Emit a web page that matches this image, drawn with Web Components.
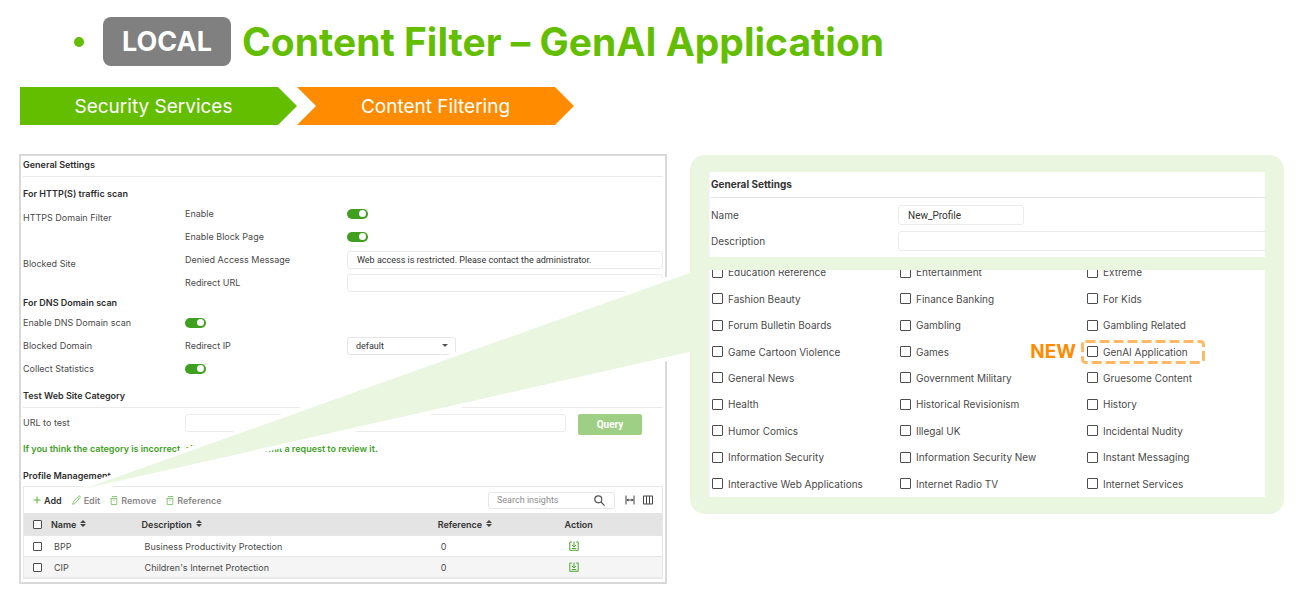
<!DOCTYPE html>
<html lang="en">
<head>
<meta charset="utf-8">
<meta name="viewport" content="width=device-width, initial-scale=1">
<title>Content Filter – GenAI Application</title>
<style>
  body { margin: 0; background: #fff; font-family: Inter, "Liberation Sans", sans-serif; color: #4a4a4a; }
</style>
</head>
<body>
<release-page></release-page>
<script>
const define = (name, markup, setup) => {
  const template = document.createElement('template');
  template.innerHTML = markup;
  customElements.define(name, class extends HTMLElement {
    constructor() {
      super();
      this.attachShadow({ mode: 'open' }).append(template.content.cloneNode(true));
    }
    connectedCallback() {
      if (setup && !this.ready) { this.ready = true; setup(this, this.shadowRoot); }
    }
  });
};

/* On/off switch */
define('ui-toggle', `
  <style>
    :host { display: block; line-height: 0; }
    input { appearance: none; box-sizing: border-box; width: 21px; height: 10px; margin: 0; padding: 2px; border-radius: 5px;
      background: #b5b5b5; display: flex; align-items: center; }
    input:checked { background: #3f9f1f; justify-content: flex-end; }
    input::before { content: ""; width: 7px; height: 7px; border-radius: 50%; background: #fff; }
  </style>
  <input type="checkbox" role="switch" checked>`,
  (host, root) => root.querySelector('input').setAttribute('aria-label', host.getAttribute('label')));

/* Tick box with an optional caption */
define('ui-check', `
  <style>
    :host { display: block; }
    label { display: flex; align-items: center; gap: 5px; }
    input { appearance: none; flex: none; box-sizing: border-box; width: var(--box, 11px); height: var(--box, 11px); margin: 0;
      border: 1px solid #4d4d4d; border-radius: 1px; background: #fff; }
    input:checked { background: #3f9f1f; }
  </style>
  <label><input type="checkbox"><slot></slot></label>`,
  (host, root) => {
    if (host.hasAttribute('label')) root.querySelector('input').setAttribute('aria-label', host.getAttribute('label'));
  });

/* Single-line text box */
define('ui-field', `
  <style>
    :host { display: block; }
    input { display: block; box-sizing: border-box; width: 100%; height: var(--h, 18px); margin: 0; padding: 0 9px;
      border: 1px solid #ebebeb; border-radius: 3px; background: #fff; font: inherit; font-family: Roboto, sans-serif; color: #333; outline: 0; }
  </style>
  <input type="text">`,
  (host, root) => {
    const input = root.querySelector('input');
    input.value = host.getAttribute('value') || '';
    input.setAttribute('aria-label', host.getAttribute('label'));
  });

/* Slide title with its badge */
define('page-title', `
  <style>
    :host { display: flex; align-items: center; padding-left: 74px; }
    .dot { width: 10px; height: 10px; border-radius: 50%; background: #64be00; margin-right: 19px; }
    .badge { box-sizing: border-box; min-width: 128px; height: 49px; border-radius: 8px; background: #808080; color: #fff;
      font-size: 27px; font-weight: 700; line-height: 49px; text-align: center; margin-right: 11px; }
    h1 { margin: 0; font-size: 39px; line-height: 49px; font-weight: 650; color: #64be00; white-space: nowrap; font-feature-settings: "calt" 0; }
  </style>
  <span class="dot"></span><span class="badge"><slot name="badge"></slot></span><h1><slot></slot></h1>`);

/* Arrow-shaped step of the menu path */
define('path-step', `
  <style>
    :host { display: block; box-sizing: border-box; width: 277px; height: 38px; line-height: 39px; font-size: 19px; text-align: center; color: #fff;
      background: #64be00; padding-right: 10px; clip-path: polygon(0 0, calc(100% - 19px) 0, 100% 50%, calc(100% - 19px) 100%, 0 100%); }
    :host([current]) { background: #ff8c00; padding-right: 0;
      clip-path: polygon(0 0, calc(100% - 19px) 0, 100% 50%, calc(100% - 19px) 100%, 0 100%, 19px 50%); }
  </style>
  <slot></slot>`);

/* Toolbar and table of filter profiles */
define('profile-table', `
  <style>
    :host { display: block; border: 1px solid #e8e8e8; border-bottom-width: 2px; font-size: 9px; }
    .bar { display: flex; align-items: center; height: 26px; padding: 0 9px; }
    button { display: flex; align-items: center; gap: 3px; border: 0; margin: 0; padding: 0; background: none; font: inherit;
      font-weight: 600; color: #8a8a8a; }
    .tools { display: flex; gap: 10px; flex: 1; }
    .tools .on { color: #333; }
    .search { display: flex; align-items: center; box-sizing: border-box; width: 127px; height: 17px; border: 1px solid #e6e6e6;
      border-radius: 3px; padding: 0 9px 0 8px; }
    .search input { flex: 1; min-width: 0; border: 0; padding: 0; margin: 0; font: inherit; font-family: Roboto, sans-serif; outline: 0; background: none; }
    .search input::placeholder { color: #8c8c8c; }
    .icons { display: flex; gap: 8px; margin-left: 10px; }
    svg { display: block; flex: none; fill: none; }
    table { width: 100%; border-collapse: collapse; table-layout: fixed; }
    th { height: 22px; padding: 0; background: #e4e4e4; color: #333; font-weight: 600; text-align: left; }
    th span { display: flex; align-items: center; gap: 4px; }
    th svg { fill: #444; }
    td { height: 20px; padding: 0 0 0 3px; border-top: 1px solid #e6e6e6; }
    tr.alt td { background: #f5f5f5; }
    th:first-child, td:first-child { padding: 0 0 0 9px; }
    td:last-child { padding-left: 4px; }
    ui-check { --box: 9px; }
  </style>
  <div class="bar">
    <div class="tools">
      <button class="on"><svg width="8" height="8" viewBox="0 0 8 8" stroke="#5fb043"><path d="M4 .5v7M.5 4h7"/></svg>Add</button>
      <button><svg width="9" height="10" viewBox="0 0 9 10" stroke="#8cc978"><path d="M.7 9.3l.6-2.6L6.5 1.2q.8-.6 1.5 0 .7.8 0 1.5L3 8.5zM5.6 2.2l1.5 1.5"/></svg>Edit</button>
      <button><svg width="8" height="9" viewBox="0 0 8 9" stroke="#8cc978"><path d="M2 .5h5.2M.5 2.5h6.5M1.2 2.5v6h5.6v-6M3.2 4.2h1.6"/></svg>Remove</button>
      <button><svg width="8" height="9" viewBox="0 0 8 9" stroke="#8cc978"><path d="M2 .5h5.2M.5 2.5h6.5M1.2 2.5v6h5.6v-6M3.2 4.2h1.6"/></svg>Reference</button>
    </div>
    <label class="search"><input type="search" placeholder="Search insights" aria-label="Search insights">
      <svg width="11" height="11" viewBox="0 0 11 11" stroke="#555" stroke-width="1.2"><circle cx="4.3" cy="4.3" r="3.5"/><path d="M7 7l3.6 3.6"/></svg></label>
    <div class="icons">
      <button aria-label="Fit columns"><svg width="10" height="10" viewBox="0 0 10 10" stroke="#444"><path d="M1 .5v9M9 .5v9M1.5 5h7"/><path d="M1.5 5l2-1.5v3zM8.5 5l-2-1.5v3z" fill="#444" stroke="none"/></svg></button>
      <button aria-label="Choose columns"><svg width="10" height="10" viewBox="0 0 10 10" stroke="#444"><path d="M.5 1h9v8h-9zM3.5 1v8M6.5 1v8"/></svg></button>
    </div>
  </div>
  <table>
    <colgroup><col style="width:27px"><col style="width:14.2%"><col style="width:46.4%"><col style="width:19.9%"><col></colgroup>
    <thead><tr>
      <th><ui-check label="Select all"></ui-check></th>
      <th><span>Name<svg width="6" height="9" viewBox="0 0 6 9"><path d="M3 0l3 3H0zM0 4h6L3 7z"/></svg></span></th>
      <th><span>Description<svg width="6" height="9" viewBox="0 0 6 9"><path d="M3 0l3 3H0zM0 4h6L3 7z"/></svg></span></th>
      <th><span>Reference<svg width="6" height="9" viewBox="0 0 6 9"><path d="M3 0l3 3H0zM0 4h6L3 7z"/></svg></span></th>
      <th>Action</th>
    </tr></thead>
    <tbody></tbody>
  </table>`,
  (host, root) => {
    const rows = [['BPP', 'Business Productivity Protection'], ['CIP', "Children's Internet Protection"]];
    root.querySelector('tbody').innerHTML = rows.map(([name, text], i) => `
      <tr${i % 2 ? ' class="alt"' : ''}><td><ui-check label="Select ${name}"></ui-check></td><td>${name}</td><td>${text}</td><td>0</td>
      <td><button aria-label="Save ${name}"><svg width="10" height="10" viewBox="0 0 10 10" stroke="#4aa52c"><path d="M2.8 1H.8v8.3h8.4V1H7.2M5 .5v5.3M3 4l2 2 2-2M2.8 7.5h4.4"/></svg></button></td></tr>`).join('');
  });

/* Content filter settings screen */
define('settings-panel', `
  <style>
    :host { display: block; box-sizing: border-box; border: 2px solid #d9d9d9; padding: 0 2px 3px; font-size: 9px; background: #fff; }
    h2 { margin: 0; font-size: 9px; font-weight: 600; color: #2e2e2e; line-height: 17px; }
    h2.rule { border-bottom: 1px solid #ebebeb; padding-bottom: 3px; }
    .grid { display: grid; grid-template-columns: 162fr 162fr 316fr; grid-auto-rows: 23px; align-items: center; }
    .grid .group { padding-top: 8px; }
    .top { margin-top: 8px; }
    .tests { margin-top: 7px; }
    .url { display: grid; grid-template-columns: 162fr 381fr 12fr 64fr 21fr; margin-top: 6px; align-items: start; line-height: 17px; }
    .url button { grid-column: 4; height: 21px; border: 0; border-radius: 2px; padding: 0; background: #9fcf85; color: #fff;
      font: 700 10px Roboto, sans-serif; }
    .select { display: grid; width: 109px; align-items: center; }
    .select > * { grid-area: 1 / 1; }
    select { appearance: none; height: 18px; margin: 0; padding: 0 8px; border: 1px solid #e6e6e6; border-radius: 3px; background: #fff;
      font: inherit; font-family: Roboto, sans-serif; color: #333; }
    .select svg { justify-self: end; margin-right: 8px; pointer-events: none; }
    p { margin: 0; padding: 5px 0 8px; line-height: 18px; font-weight: 600; color: #3f9f1f; }
    .profiles { margin: 1px 0 2px; }
  </style>
  <h2 class="rule">General Settings</h2>
  <h2 class="top">For HTTP(S) traffic scan</h2>
  <div class="grid">
    <span class="group">HTTPS Domain Filter</span><span>Enable</span><ui-toggle label="Enable"></ui-toggle>
    <span></span><span>Enable Block Page</span><ui-toggle label="Enable Block Page"></ui-toggle>
    <span class="group">Blocked Site</span><span>Denied Access Message</span>
    <ui-field label="Denied Access Message" value="Web access is restricted. Please contact the administrator."></ui-field>
    <span></span><span>Redirect URL</span><ui-field label="Redirect URL"></ui-field>
  </div>
  <h2>For DNS Domain scan</h2>
  <div class="grid">
    <span>Enable DNS Domain scan</span><ui-toggle label="Enable DNS Domain scan"></ui-toggle><span></span>
    <span>Blocked Domain</span><label for="ip">Redirect IP</label>
    <span class="select"><select id="ip"><option>default</option></select>
      <svg width="6" height="3" viewBox="0 0 6 3"><path d="M0 0h6L3 3z" fill="#555"/></svg></span>
    <span>Collect Statistics</span><ui-toggle label="Collect Statistics"></ui-toggle>
  </div>
  <h2 class="rule tests">Test Web Site Category</h2>
  <div class="url"><span>URL to test</span><ui-field label="URL to test"></ui-field><button>Query</button></div>
  <p>If you think the category is incorrect, click the link to submit a request to review it.</p>
  <h2 class="profiles">Profile Management</h2>
  <profile-table></profile-table>`);

/* Enlarged view of the profile editor */
define('profile-callout', `
  <style>
    :host { display: grid; gap: 13px; box-sizing: border-box; padding: 17px 19px 17px 18px; border-radius: 15px; background: #eaf6df; font-size: 10px; }
    section { background: #fff; overflow: hidden; box-shadow: inset 3px 0 3px -2px #e8e8ee; }
    .general { padding: 0 0 3px 3px; }
    h2 { margin: 0; font-size: 10px; line-height: 25px; font-weight: 700; color: #333; border-bottom: 1px solid #e6e6e6; }
    .row { display: grid; grid-template-columns: 187fr 367fr; align-items: center; height: 26px; --h: 20px; }
    .row:nth-child(2) { margin-top: 4px; }
    .row:nth-child(2) ui-field { width: 126px; }
    .row:nth-child(3) ui-field { margin-right: -4px; }
    .list { height: 227px; }
    ul { list-style: none; display: grid; grid-template-columns: 188fr 187fr 178fr; grid-auto-rows: 1fr; align-items: center;
      height: 238px; margin: -11px 0 0; padding: 0 0 0 4px; }
    li { display: flex; }
    .new { position: relative; }
    .new b { position: absolute; right: 100%; margin-right: 11px; top: 50%; transform: translateY(-50%); font-size: 19px; line-height: 24px; color: #ff8c00; }
    .new svg { position: absolute; left: -6px; top: 50%; margin-top: -12px; pointer-events: none; }
  </style>
  <section class="general">
    <h2>General Settings</h2>
    <div class="row"><span>Name</span><ui-field label="Name" value="New_Profile"></ui-field></div>
    <div class="row"><span>Description</span><ui-field label="Description"></ui-field></div>
  </section>
  <section class="list"><ul></ul></section>`,
  (host, root) => {
    const names = ['Education Reference', 'Entertainment', 'Extreme', 'Fashion Beauty', 'Finance Banking', 'For Kids',
      'Forum Bulletin Boards', 'Gambling', 'Gambling Related', 'Game Cartoon Violence', 'Games', 'GenAI Application',
      'General News', 'Government Military', 'Gruesome Content', 'Health', 'Historical Revisionism', 'History',
      'Humor Comics', 'Illegal UK', 'Incidental Nudity', 'Information Security', 'Information Security New',
      'Instant Messaging', 'Interactive Web Applications', 'Internet Radio TV', 'Internet Services'];
    root.querySelector('ul').innerHTML = names.map(name => name === 'GenAI Application'
      ? `<li class="new"><b>NEW</b><ui-check>${name}</ui-check><svg width="124" height="24" viewBox="0 0 124 24" fill="none" stroke="#ffb866" stroke-width="3" stroke-dasharray="10 4"><rect x="1.5" y="1.5" width="121" height="21" rx="3"/></svg></li>`
      : `<li><ui-check>${name}</ui-check></li>`).join('');
  });

/* Whole page: title, menu path, screen and its callout */
define('release-page', `
  <style>
    :host { display: block; padding: 17px 0 9px; }
    nav { display: flex; margin: 21px 20px 29px; }
    main { position: relative; display: grid; grid-template-columns: 648fr 594fr; gap: 23px; align-items: start; padding: 0 12px 0 19px; }
    .beam { position: absolute; left: 0; top: 0; width: 100%; height: 100%; pointer-events: none; }
    profile-callout { position: relative; margin-top: 1px; }
  </style>
  <page-title><span slot="badge">LOCAL</span>Content Filter – GenAI Application</page-title>
  <nav aria-label="Menu path"><path-step>Security Services</path-step><path-step current>Content Filtering</path-step></nav>
  <main>
    <settings-panel></settings-panel>
    <svg class="beam" viewBox="0 0 1296 429" preserveAspectRatio="none">
      <path d="M84 334L700 115V195z" fill="#eaf6df" stroke="#fff" stroke-width="8" paint-order="stroke"/>
    </svg>
    <profile-callout></profile-callout>
  </main>`);
</script>
</body>
</html>
